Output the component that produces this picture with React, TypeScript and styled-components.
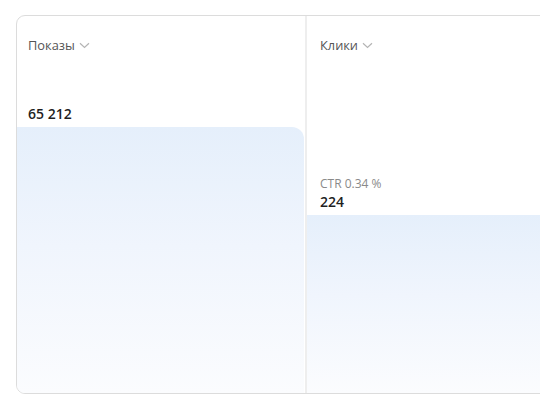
import React from "react";
import styled, { createGlobalStyle } from "styled-components";

const Global = createGlobalStyle`
  html, body { margin: 0; padding: 0; background: #ffffff; overflow: hidden; }
  body { font-family: "Open Sans", "Noto Sans", Arial, sans-serif; }
`;

const Page = styled.div`
  width: 540px;
  height: 406px;
  padding: 15px 0 0 16px;
  box-sizing: border-box;
  overflow: hidden;
`;

const Card = styled.div`
  width: 620px;
  height: 379px;
  box-sizing: border-box;
  border: 1px solid #dcdcdc;
  border-radius: 9px;
  display: grid;
  grid-template-columns: 288px 1fr;
  overflow: hidden;
  background: #fff;
`;

const Column = styled.div<{ $divider?: boolean }>`
  display: flex;
  flex-direction: column;
  min-height: 0;
  border-left: ${(p) => (p.$divider ? "2px solid #eeeeee" : "none")};
`;

const Header = styled.div<{ $pad: number }>`
  display: flex;
  align-items: center;
  gap: 4px;
  padding: 20px ${(p) => p.$pad}px 0 ${(p) => p.$pad}px;
  height: 18px;
  font-size: 12.8px;
  color: #555;
`;

const Body = styled.div<{ $pad: number }>`
  flex: 1;
  display: flex;
  flex-direction: column;
  justify-content: flex-end;
  padding: 0 ${(p) => p.$pad}px 5px ${(p) => p.$pad}px;
`;

const Sub = styled.div`
  font-size: 12px;
  color: #8a8a8a;
  line-height: 14px;
  margin-bottom: 3px;
`;

const Value = styled.div`
  font-size: 14px;
  font-weight: 600;
  color: #1f1f1f;
  line-height: 16px;
`;

const Bar = styled.div<{ $round?: boolean }>`
  flex: none;
  background: linear-gradient(180deg, #e5effb 0%, #f0f5fd 45%, #fbfcfe 100%);
  border-top-right-radius: ${(p) => (p.$round ? "12px" : "0")};
  margin-right: ${(p) => (p.$round ? "1px" : "0")};
`;

const Chevron = () => (
  <svg width="11" height="7" viewBox="0 0 11 7" fill="none">
    <path d="M1 1.2 L5.5 5.4 L10 1.2" stroke="#b5b5b5" strokeWidth="1.2" />
  </svg>
);

const metrics = [
  { title: "Показы", sub: null as string | null, value: "65 212", bar: 266 },
  { title: "Клики", sub: "CTR 0.34 %", value: "224", bar: 178 },
];

export default function App() {
  return (
    <Page>
      <Global />
      <Card>
        {metrics.map((m, i) => (
          <Column key={m.title} $divider={i > 0}>
            <Header $pad={i === 0 ? 11 : 13}>
              {m.title}
              <Chevron />
            </Header>
            <Body $pad={i === 0 ? 11 : 13}>
              {m.sub && <Sub>{m.sub}</Sub>}
              <Value>{m.value}</Value>
            </Body>
            <Bar $round={i === 0} style={{ height: m.bar }} />
          </Column>
        ))}
      </Card>
    </Page>
  );
}
